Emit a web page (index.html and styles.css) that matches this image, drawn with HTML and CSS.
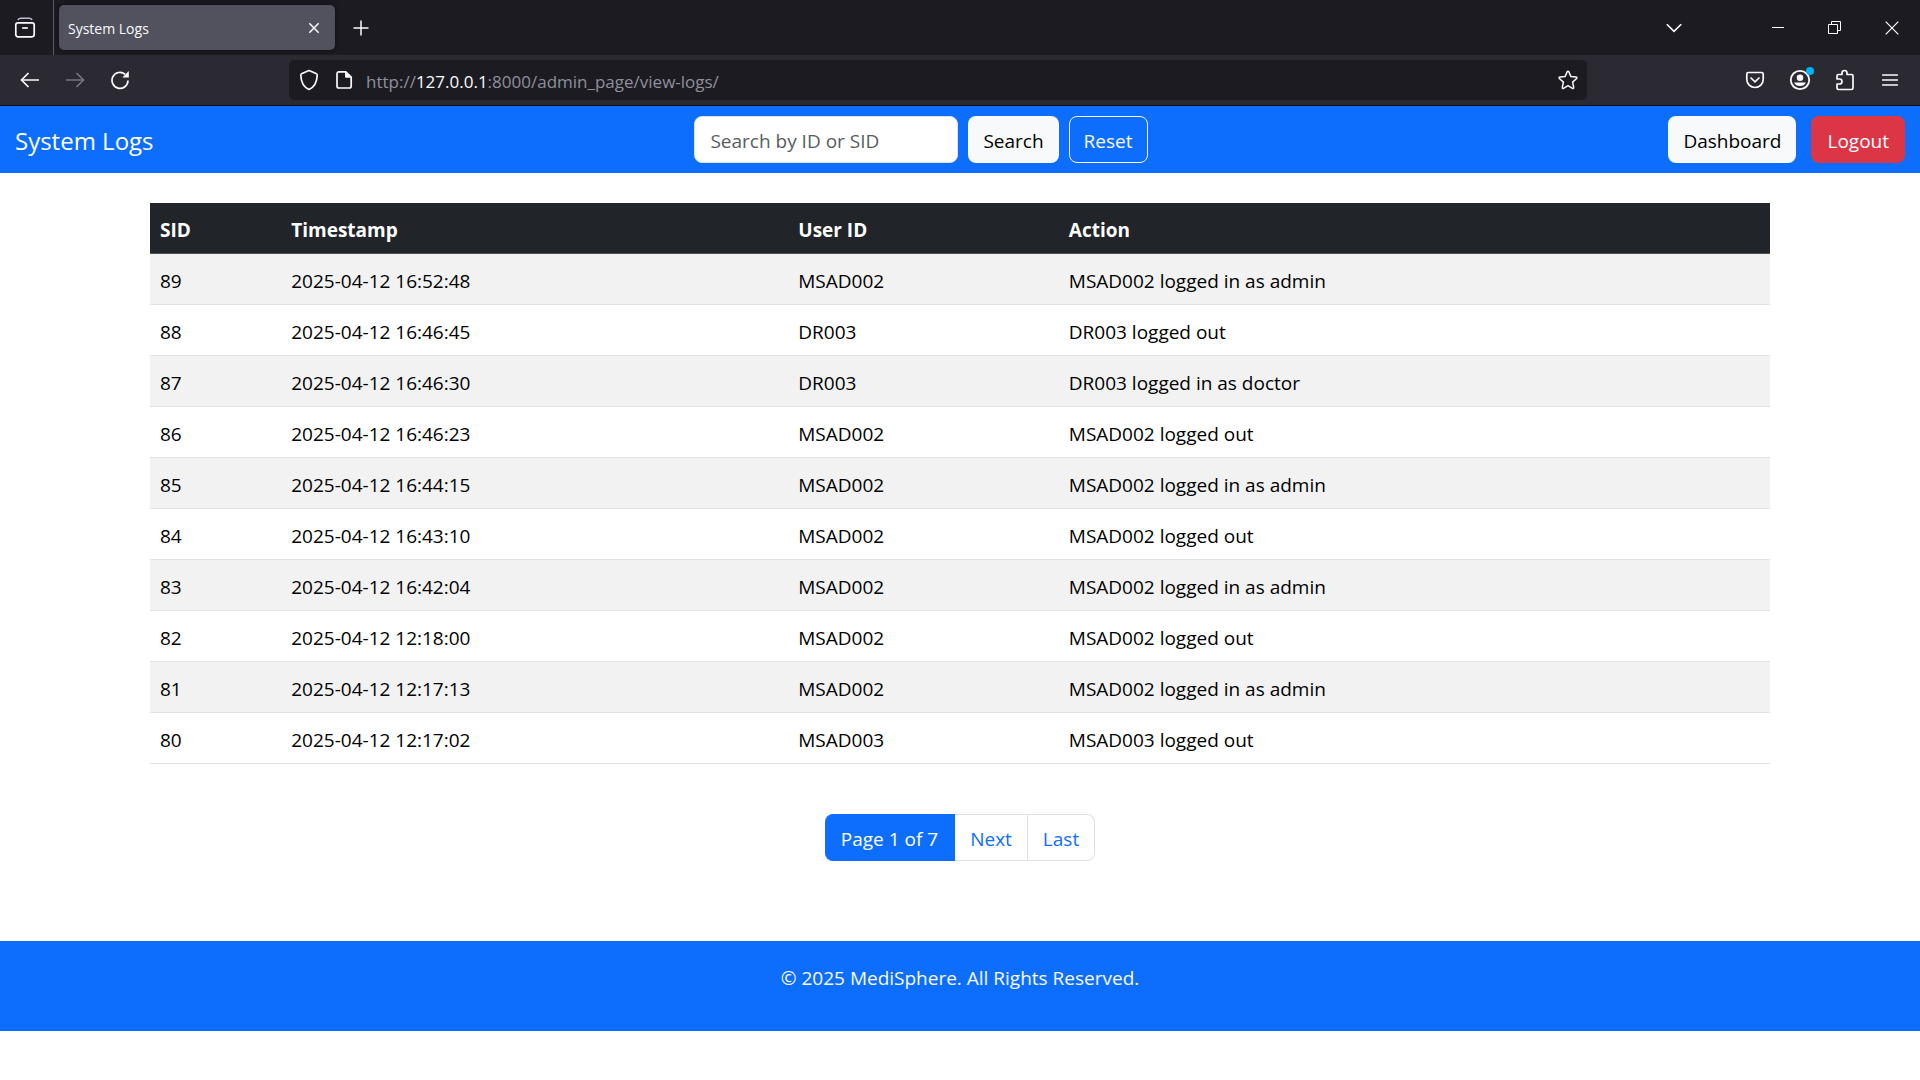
FILE: index.html
```html
<!DOCTYPE html>
<html lang="en">
<head>
<meta charset="utf-8">
<meta name="viewport" content="width=device-width, initial-scale=1">
<title>System Logs</title>
<link rel="stylesheet" href="styles.css">
</head>
<body>
<div class="browser">
  <div class="tabstrip">
    <button class="icon-btn firefox-view" aria-label="Recent browsing">
      <svg width="22" height="22" viewBox="0 0 22 22"><path d="M4 3.2C4.3 1.8 5 1.2 6.5 1.2h9c1.500 0 2.200.6 2.500 2" fill="none" stroke="#bfbfc9" stroke-width="1.500"/><rect x="1.800" y="5.800" width="18.400" height="14" rx="2.200" fill="none" stroke="currentColor" stroke-width="1.700"/><path d="M8.200 11h5.600" stroke="currentColor" stroke-width="1.700"/></svg>
    </button>
    <div class="tab">
      <span class="tab-title">System Logs</span>
      <button class="tab-close" aria-label="Close tab">
        <svg width="12" height="12" viewBox="0 0 12 12"><path d="M1.300 1.300l9.400 9.400M10.700 1.300l-9.400 9.400" stroke="currentColor" stroke-width="1.500"/></svg>
      </button>
    </div>
    <button class="icon-btn new-tab" aria-label="New tab">
      <svg width="16" height="16" viewBox="0 0 16 16"><path d="M8 .5v15M.5 8h15" stroke="currentColor" stroke-width="1.500"/></svg>
    </button>
    <button class="icon-btn list-tabs" aria-label="List all tabs">
      <svg width="16" height="10" viewBox="0 0 16 10"><path d="M.8 1.200L8 8.400l7.200-7.200" fill="none" stroke="currentColor" stroke-width="1.600"/></svg>
    </button>
    <div class="window-controls">
      <button class="window-btn" aria-label="Minimize"><svg width="12" height="12" viewBox="0 0 12 12"><path d="M0 5.500h12" stroke="currentColor"/></svg></button>
      <button class="window-btn" aria-label="Restore"><svg width="13" height="13" viewBox="0 0 13 13"><path d="M.5 3.500h9v9h-9zM3.500 3.500v-3h9v9h-3" fill="none" stroke="currentColor"/></svg></button>
      <button class="window-btn" aria-label="Close"><svg width="14" height="14" viewBox="0 0 14 14"><path d="M.7.7l12.600 12.600M13.300.7L.7 13.300" stroke="currentColor" stroke-width="1.200"/></svg></button>
    </div>
  </div>
  <div class="toolbar">
    <div class="toolbar-group">
      <button class="icon-btn" aria-label="Back"><svg width="20" height="16" viewBox="0 0 20 16"><path d="M19 8H2M8.500 1L1.500 8l7 7" fill="none" stroke="currentColor" stroke-width="1.700"/></svg></button>
      <button class="icon-btn" aria-label="Forward" disabled><svg width="20" height="16" viewBox="0 0 20 16"><path d="M1 8h17M11.500 1l7 7-7 7" fill="none" stroke="currentColor" stroke-width="1.700"/></svg></button>
      <button class="icon-btn" aria-label="Reload"><svg width="20" height="20" viewBox="0 0 20 20"><path d="M18 10.500A8 8 0 1 1 15.200 4.300" fill="none" stroke="currentColor" stroke-width="1.700"/><path d="M18.800 1v6.500h-6.500z" fill="currentColor"/></svg></button>
    </div>
    <div class="urlbar">
      <button class="url-btn" aria-label="Tracking protection"><svg width="20" height="22" viewBox="0 0 20 22"><path d="M10 1.500l7 3c.8.3 1.200.9 1.200 1.700C18 12.500 15.500 18 10 20.500 4.500 18 2 12.500 1.800 6.200c0-.8.4-1.400 1.200-1.700z" fill="none" stroke="currentColor" stroke-width="1.700" stroke-linejoin="round"/></svg></button>
      <button class="url-btn" aria-label="Site information"><svg width="18" height="20" viewBox="0 0 18 20"><path d="M4 1.800h6.800l5.400 5.400V16a2 2 0 0 1-2 2H4a2 2 0 0 1-2-2V3.800a2 2 0 0 1 2-2z" fill="none" stroke="currentColor" stroke-width="1.700"/><path d="M10 1.500v5.300a1 1 0 0 0 1 1h5.500z" fill="currentColor"/></svg></button>
      <div class="url-text" role="textbox" aria-label="Address">http://<span class="url-host">127.0.0.1</span>:8000/admin_page/view-logs/</div>
      <button class="url-btn" aria-label="Bookmark this page"><svg width="20" height="20" viewBox="0 0 20 20"><path d="M9.200 1.700a.9.900 0 0 1 1.600 0l2 4.700 5.300.6c.8.100 1.100 1 .5 1.500l-4 3.600 1.100 5.300c.2.800-.6 1.300-1.300.9L10 15.700l-4.400 2.600c-.7.4-1.500-.1-1.300-.9l1.100-5.300-4-3.600c-.6-.5-.3-1.400.5-1.500l5.300-.6z" fill="none" stroke="currentColor" stroke-width="1.500" stroke-linejoin="round"/></svg></button>
    </div>
    <div class="toolbar-group">
      <button class="icon-btn" aria-label="Save to Pocket"><svg width="20" height="18" viewBox="0 0 20 18"><path d="M3.300 1.500h13.400c1 0 1.500.5 1.500 1.500v5.500a8.200 8 0 0 1-16.400 0V3c0-1 .5-1.500 1.500-1.500z" fill="none" stroke="currentColor" stroke-width="1.700"/><path d="M5.500 6.500L10 10.800l4.500-4.300" fill="none" stroke="currentColor" stroke-width="1.700"/></svg></button>
      <button class="icon-btn account" aria-label="Account"><svg width="22" height="22" viewBox="0 0 22 22"><circle cx="11" cy="11" r="9.200" fill="none" stroke="currentColor" stroke-width="1.800"/><circle cx="11" cy="8.800" r="3.300" fill="currentColor"/><path d="M5 13.500h12a6.600 6 0 0 1-12 0z" fill="currentColor"/></svg><span class="account-dot"></span></button>
      <button class="icon-btn" aria-label="Extensions"><svg width="20" height="22" viewBox="0 0 20 22"><path d="M2 9V7q0-1.500 1.500-1.500H7V4a2.500 2.500 0 0 1 5 0v1.500h4.500Q18 5.500 18 7v12q0 1.500-1.500 1.500h-13Q2 20.500 2 19v-4h2.500a2.500 2.500 0 0 0 0-5H2z" fill="none" stroke="currentColor" stroke-width="1.700" stroke-linejoin="round"/></svg></button>
      <button class="icon-btn" aria-label="Application menu"><svg width="16" height="14" viewBox="0 0 16 14"><path d="M.5 2h15M.5 7h15M.5 12h15" stroke="currentColor" stroke-width="1.500" stroke-linecap="round"/></svg></button>
    </div>
  </div>
</div>

<nav class="navbar">
  <a class="brand" href="#">System Logs</a>
  <form class="search">
    <input class="search-input" type="search" placeholder="Search by ID or SID" aria-label="Search by ID or SID">
    <button class="btn btn-light" type="submit">Search</button>
    <a class="btn btn-outline" href="#">Reset</a>
  </form>
  <div class="nav-actions">
    <a class="btn btn-light" href="#">Dashboard</a>
    <a class="btn btn-danger" href="#">Logout</a>
  </div>
</nav>

<main class="container">
  <table class="logs">
    <colgroup><col class="col-sid"><col class="col-time"><col class="col-user"><col></colgroup>
    <thead>
      <tr><th scope="col">SID</th><th scope="col">Timestamp</th><th scope="col">User ID</th><th scope="col">Action</th></tr>
    </thead>
    <tbody>
      <tr><td>89</td><td>2025-04-12 16:52:48</td><td>MSAD002</td><td>MSAD002 logged in as admin</td></tr>
      <tr><td>88</td><td>2025-04-12 16:46:45</td><td>DR003</td><td>DR003 logged out</td></tr>
      <tr><td>87</td><td>2025-04-12 16:46:30</td><td>DR003</td><td>DR003 logged in as doctor</td></tr>
      <tr><td>86</td><td>2025-04-12 16:46:23</td><td>MSAD002</td><td>MSAD002 logged out</td></tr>
      <tr><td>85</td><td>2025-04-12 16:44:15</td><td>MSAD002</td><td>MSAD002 logged in as admin</td></tr>
      <tr><td>84</td><td>2025-04-12 16:43:10</td><td>MSAD002</td><td>MSAD002 logged out</td></tr>
      <tr><td>83</td><td>2025-04-12 16:42:04</td><td>MSAD002</td><td>MSAD002 logged in as admin</td></tr>
      <tr><td>82</td><td>2025-04-12 12:18:00</td><td>MSAD002</td><td>MSAD002 logged out</td></tr>
      <tr><td>81</td><td>2025-04-12 12:17:13</td><td>MSAD002</td><td>MSAD002 logged in as admin</td></tr>
      <tr><td>80</td><td>2025-04-12 12:17:02</td><td>MSAD003</td><td>MSAD003 logged out</td></tr>
    </tbody>
  </table>
  <nav aria-label="Pages">
    <ul class="pagination">
      <li class="page current" aria-current="page">Page 1 of 7</li>
      <li><a class="page" href="#">Next</a></li>
      <li><a class="page" href="#">Last</a></li>
    </ul>
  </nav>
</main>

<footer class="footer">
  <p>© 2025 MediSphere. All Rights Reserved.</p>
</footer>
</body>
</html>
```
FILE: styles.css
```css
* {
  box-sizing: border-box;
}

body {
  margin: 0;
  background: #fff;
  color: #000;
  font-family: "Segoe UI", "Open Sans", "Noto Sans", sans-serif;
  font-size: 19px;
  line-height: 30px;
}

button,
input {
  font: inherit;
}

svg {
  display: block;
}

/* Browser window */
.browser {
  color: #fbfbfe;
  border-bottom: 1px solid #0c0c0d;
}

.browser button {
  display: flex;
  align-items: center;
  justify-content: center;
  padding: 0;
  border: 0;
  background: none;
  color: inherit;
}

.tabstrip {
  display: flex;
  align-items: center;
  height: 55px;
  background: #1c1b22;
}

.browser .firefox-view {
  width: 54px;
  height: 55px;
  padding-right: 4px;
  border-right: 1px solid #5b5b66;
}

.tab {
  display: flex;
  align-items: center;
  justify-content: space-between;
  width: 276px;
  height: 45px;
  margin-left: 5px;
  padding: 0 15px 0 9px;
  border-radius: 5px;
  background: #52525e;
  box-shadow: 0 0 4px #0c0c0d;
  font-size: 14px;
  line-height: 20px;
}

.tab-title {
  padding-top: 2px;
}

.icon-btn {
  flex: none;
  width: 45px;
  height: 40px;
}

.new-tab {
  margin-left: 3px;
}

.list-tabs {
  margin-left: auto;
}

.window-controls {
  display: flex;
  margin-left: 53px;
}

.window-btn {
  width: 57px;
  height: 40px;
}

.toolbar {
  display: flex;
  align-items: center;
  height: 50px;
  padding: 0 8px 0 7px;
  background: #2b2a33;
}

.toolbar-group {
  display: flex;
}

.browser .icon-btn:disabled {
  color: #77767f;
}

.urlbar {
  display: flex;
  flex: 1;
  align-items: center;
  height: 40px;
  margin: 0 145px 0 147px;
  border-radius: 5px;
  background: #1c1b22;
}

.url-btn {
  width: 35px;
  height: 40px;
}

.url-btn:first-child {
  margin-left: 2px;
}

.url-btn:last-child {
  margin-right: 2px;
}

.url-text {
  flex: 1;
  padding: 3px 0 0 5px;
  color: #8f8f9b;
  font-size: 17px;
  line-height: 24px;
}

.url-host {
  color: #fbfbfe;
}

.account {
  position: relative;
}

.account-dot {
  position: absolute;
  top: 7px;
  right: 8px;
  width: 8px;
  height: 8px;
  border-radius: 50%;
  background: #00b3f4;
}

/* Page header */
.navbar {
  display: flex;
  flex-wrap: wrap;
  align-items: center;
  justify-content: space-between;
  padding: 10px 15px;
  background: #0d6efd;
}

.brand {
  margin-right: 20px;
  padding-top: 2px;
  color: #fff;
  font-size: 24px;
  text-decoration: none;
}

.search {
  display: flex;
  gap: 10px;
}

.search-input {
  width: 264px;
  height: 47px;
  padding: 2px 15px 0;
  border: 1px solid #dee2e6;
  border-radius: 8px;
  background: #fff;
  color: #212529;
}

.search-input::placeholder {
  color: #595c5f;
  opacity: 1;
}

.nav-actions {
  display: flex;
  gap: 15px;
}

.btn {
  height: 47px;
  padding: 9px 14px 6px;
  border: 1px solid transparent;
  border-radius: 8px;
  text-decoration: none;
}

.btn-light {
  background: #f8f9fa;
  color: #000;
}

.btn-outline {
  border-color: #f8f9fa;
  color: #f8f9fa;
}

.btn-danger {
  padding: 9px 15px 6px;
  background: #dc3545;
  color: #fff;
}

/* Log table */
.container {
  max-width: 1650px;
  margin: 30px auto 80px;
  padding: 0 15px;
}

.logs {
  width: 100%;
  table-layout: fixed;
  border-collapse: separate;
  border-spacing: 0;
}

.col-sid {
  width: 8.1%;
}

.col-time {
  width: 31.3%;
}

.col-user {
  width: 16.7%;
}

.logs th,
.logs td {
  padding: 12px 10px 8px;
  border-bottom: 1px solid #dee2e6;
  text-align: left;
}

.logs th {
  border-color: #4d5154;
  background: #212529;
  color: #fff;
  font-weight: 700;
}

.logs tbody tr:nth-child(odd) {
  background: #f2f2f2;
}

.pagination {
  display: flex;
  justify-content: center;
  margin: 50px 0 0;
  padding: 0;
  list-style: none;
}

.page {
  display: block;
  height: 47px;
  padding: 9px 15px 6px;
  border: 1px solid #dee2e6;
  border-left: 0;
  color: #0d6efd;
  text-decoration: none;
}

.pagination .current {
  padding: 9px 16px 6px;
  border-color: #0d6efd;
  border-radius: 8px 0 0 8px;
  background: #0d6efd;
  color: #fff;
}

.pagination li:last-child .page {
  border-radius: 0 8px 8px 0;
}

.footer {
  padding: 22px 15px 38px;
  background: #0d6efd;
  color: #f8f9fa;
  text-align: center;
}

.footer p {
  margin: 0;
}
```
